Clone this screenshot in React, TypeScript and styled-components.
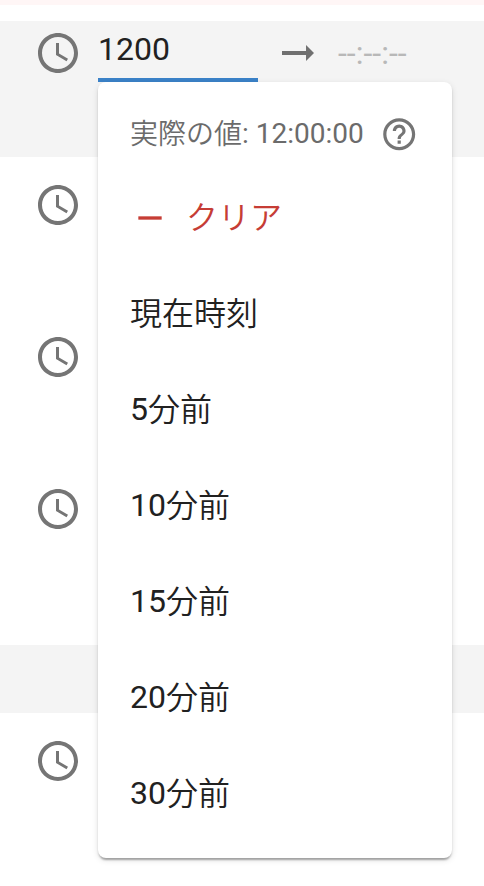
import React from "react";
import styled, { createGlobalStyle } from "styled-components";

const GlobalStyle = createGlobalStyle`
  * { box-sizing: border-box; }
  body {
    margin: 0;
    background: #fff;
    font-family: Roboto, "Noto Sans CJK JP DemiLight", "Noto Sans CJK JP Light", "Noto Sans CJK JP", sans-serif;
    color: #212121;
  }
`;

const Page = styled.main`
  position: relative;
  width: 484px;
  height: 886px;
  overflow: hidden;
  display: flex;
  flex-direction: column;
`;

const Notice = styled.div`
  height: 5px;
  flex: none;
  margin-bottom: 16px;
  background: #fff6f6;
`;

const Row = styled.section<{ $active?: boolean }>`
  display: flex;
  align-items: flex-start;
  flex: none;
  height: 136px;
  padding: 0 0 0 34px;
  margin-bottom: 16px;
  background: ${(p) => (p.$active ? "#f4f4f4" : "transparent")};
`;

const Separator = styled.div`
  flex: none;
  height: 68px;
  margin: 16px 0;
  background: #f4f4f4;
`;

const Icon = styled.svg<{ $size: number }>`
  display: block;
  flex: none;
  width: ${(p) => p.$size}px;
  height: ${(p) => p.$size}px;
  fill: currentColor;
`;

const ClockSlot = styled.span`
  margin-top: 8px;
  color: #757575;
`;

const TimeInput = styled.div`
  width: 160px;
  height: 61px;
  margin-left: 16px;
  padding-top: 9px;
  border-bottom: 4px solid #3b82c8;
  font-size: 32px;
  line-height: 38px;
`;

const ArrowSlot = styled.span`
  margin: 8px 0 0 16px;
  color: #707070;
`;

const EndTime = styled.div`
  margin: 13px 0 0 16px;
  font-size: 32px;
  line-height: 38px;
  color: #b8b8b8;
`;

const Menu = styled.div`
  position: absolute;
  left: 98px;
  top: 82px;
  width: 354px;
  height: 776px;
  padding: 16px 0;
  border-radius: 8px;
  background: #fff;
  box-shadow: 0 4px 2px -2px rgba(0, 0, 0, 0.2), 0 2px 2px rgba(0, 0, 0, 0.14),
    0 2px 6px rgba(0, 0, 0, 0.12);
`;

const ActualValue = styled.div`
  display: flex;
  align-items: center;
  height: 72px;
  padding: 0 32px;
  font-size: 28px;
  line-height: 40px;
  color: #6b6b6b;
  white-space: pre;

  svg {
    margin-left: 16px;
    color: #757575;
  }
`;

const Caption = styled.span`
  padding-top: 1px;
`;

const Digits = styled.span`
  line-height: 1;
  vertical-align: 1px;
`;

const MenuItem = styled.div<{ $danger?: boolean }>`
  display: flex;
  align-items: center;
  height: 96px;
  padding: 0 32px;
  font-size: 32px;
  line-height: 48px;
  color: ${(p) => (p.$danger ? "#c63d35" : "#212121")};

  svg {
    margin: 0 16px 0 0;
  }
`;

const PATHS = {
  clock:
    "M11.99 2C6.47 2 2 6.48 2 12s4.47 10 9.99 10C17.52 22 22 17.52 22 12S17.52 2 11.99 2zM12 20c-4.42 0-8-3.58-8-8s3.58-8 8-8 8 3.58 8 8-3.58 8-8 8zm.5-13H11v6l5.25 3.15.75-1.23-4.5-2.67z",
  arrow: "M16.01 11H4v2h12.01v3L20 12l-3.99-4z",
  help: "M11 18h2v-2h-2v2zm1-16C6.48 2 2 6.48 2 12s4.48 10 10 10 10-4.48 10-10S17.52 2 12 2zm0 18c-4.41 0-8-3.59-8-8s3.59-8 8-8 8 3.59 8 8-3.59 8-8 8zm0-14c-2.21 0-4 1.79-4 4h2c0-1.1.9-2 2-2s2 .9 2 2c0 2-3 1.75-3 5h2c0-2.25 3-2.5 3-5 0-2.21-1.79-4-4-4z",
  minus: "M19 13H5v-2h14v2z",
};

function Glyph({ name, size }: { name: keyof typeof PATHS; size: number }) {
  return (
    <Icon $size={size} viewBox="0 0 24 24" aria-hidden="true">
      <path d={PATHS[name]} />
    </Icon>
  );
}

function Clock() {
  return (
    <ClockSlot>
      <Glyph name="clock" size={48} />
    </ClockSlot>
  );
}

const MINUTES = [5, 10, 15, 20, 30];

export default function App() {
  return (
    <>
      <GlobalStyle />
      <Page lang="ja">
        <Notice />
        <Row $active>
          <Clock />
          <TimeInput>1200</TimeInput>
          <ArrowSlot>
            <Glyph name="arrow" size={48} />
          </ArrowSlot>
          <EndTime>--:--:--</EndTime>
        </Row>
        <Row><Clock /></Row>
        <Row><Clock /></Row>
        <Row><Clock /></Row>
        <Separator />
        <Row><Clock /></Row>
        <Menu>
          <ActualValue>
            <Caption>
              実際の値<Digits>: 12:00:00</Digits>
            </Caption>
            <Glyph name="help" size={38.4} />
          </ActualValue>
          <MenuItem $danger>
            <Glyph name="minus" size={40} />
            クリア
          </MenuItem>
          <MenuItem>現在時刻</MenuItem>
          {MINUTES.map((n) => (
            <MenuItem key={n}>
              <span>
                <Digits>{n}</Digits>分前
              </span>
            </MenuItem>
          ))}
        </Menu>
      </Page>
    </>
  );
}
